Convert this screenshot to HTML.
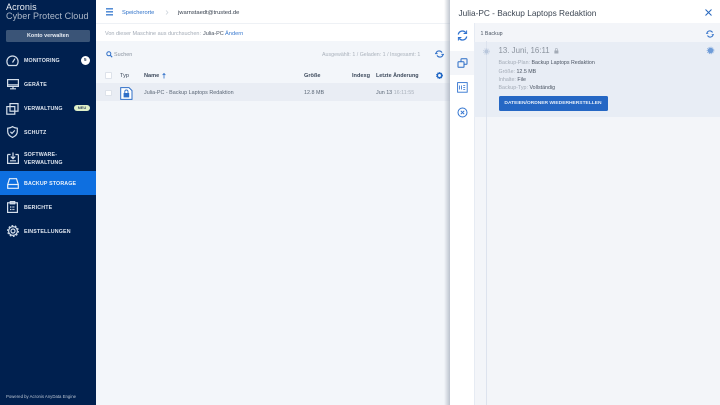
<!DOCTYPE html>
<html lang="de"><head><meta charset="utf-8"><title>Acronis Cyber Protect Cloud</title>
<style>
*{box-sizing:border-box}
html,body{margin:0;padding:0;width:720px;height:405px;overflow:hidden;background:#f3f6fa;font-family:"Liberation Sans",sans-serif}
.a{position:absolute;white-space:nowrap;line-height:1}
.box{position:absolute}
svg{position:absolute;overflow:visible;fill:none}
.nav{position:absolute;left:24px;color:#dfe6f0;font-size:5.3px;font-weight:bold;letter-spacing:.15px;line-height:8px;white-space:nowrap}
.ic{stroke:#d4deea;stroke-width:1.2}
.th{position:absolute;top:73.5px;font-size:5.6px;line-height:1;color:#3d4a5c;font-weight:bold;white-space:nowrap}
.td{position:absolute;font-size:5.4px;line-height:1;color:#5a6675;white-space:nowrap}
.k{color:#a3abb6}.v{color:#4a5462}
</style></head><body>

<!-- main -->
<div class="box" style="left:96px;top:0;width:354px;height:24px;background:#fff;border-bottom:1px solid #eef1f5"></div>
<div class="box" style="left:96px;top:24px;width:354px;height:17px;background:#fff"></div>
<div class="box" style="left:96px;top:41px;width:354px;height:364px;background:#f3f6fa"></div>
<div class="box" style="left:96px;top:83px;width:354px;height:18px;background:#e9edf4"></div>

<svg style="left:106px;top:8px" width="8" height="8"><path d="M0 .8h7M0 3.800h7M0 6.800h7" stroke="#3f7fd0" stroke-width="1.400"/></svg>
<div class="a" style="left:122px;top:10.500px;font-size:5.700px;color:#2c70c9">Speicherorte</div>
<svg style="left:165px;top:10px" width="4" height="6"><path d="M1 .5l2 2-2 2" stroke="#c4ccd6" stroke-width=".6"/></svg>
<div class="a" style="left:178px;top:10.500px;font-size:5.800px;color:#333d4b">jwarnstaedt@trusted.de</div>

<div class="a" style="left:105px;top:31.500px;font-size:5.500px;color:#a3abb6">Von dieser Maschine aus durchsuchen:</div>
<div class="a" style="left:203px;top:31.500px;font-size:5.500px;color:#47515f">Julia-PC</div>
<div class="a" style="left:225px;top:31.500px;font-size:5.700px;color:#3a7ad0">Ändern</div>

<svg style="left:106px;top:50.500px" width="7" height="7"><circle cx="2.800" cy="2.800" r="2" stroke="#2f6fc8" stroke-width="1"/><path d="M4.400 4.400l1.800 1.800" stroke="#2f6fc8" stroke-width="1.100"/></svg>
<div class="a" style="left:114px;top:52.500px;font-size:5.400px;color:#8a93a0">Suchen</div>
<div class="a" style="left:322px;top:52.500px;font-size:5.300px;color:#a9b1bb">Ausgewählt: 1 / Geladen: 1 / Insgesamt: 1</div>
<svg style="left:435px;top:50px" width="9" height="8"><path d="M1 3.200A3.300 3.300 0 0 1 7 2.600M8 4.800A3.300 3.300 0 0 1 2 5.400" stroke="#2f6fc8" stroke-width="1.100"/><path d="M0 3.600h2.600M6.400 4.400H9" stroke="#2f6fc8" stroke-width="1"/></svg>

<div class="box" style="left:105px;top:72px;width:6.500px;height:6.500px;background:#fff;border:1px solid #dde2ea;border-radius:1px"></div>
<div class="th" style="left:120px;font-weight:normal">Typ</div>
<div class="th" style="left:144px">Name</div>
<svg style="left:161.500px;top:72.500px" width="4" height="6"><path d="M2 .5v5M.6 2l1.400-1.500L3.400 2" stroke="#2f6fc8" stroke-width=".8"/></svg>
<div class="th" style="left:304px">Größe</div>
<div class="th" style="left:352px">Indexg</div>
<div class="th" style="left:376px;font-size:5.400px">Letzte Änderung</div>
<svg style="left:436px;top:71.500px" width="7" height="7"><circle cx="3.500" cy="3.500" r="2.200" stroke="#1f66c4" stroke-width="1.500"/><circle cx="3.500" cy="3.500" r="3.100" stroke="#1f66c4" stroke-width=".7" stroke-dasharray="1 1"/></svg>

<div class="box" style="left:105px;top:89.500px;width:6.500px;height:6.500px;background:#fff;border:1px solid #dde2ea;border-radius:1px"></div>
<svg style="left:120px;top:86.500px" width="13" height="13"><path d="M.7.6h8.300l3 3v8.800H.7z" fill="#fff" stroke="#2f6fc8" stroke-width="1"/><rect x="3.600" y="6" width="5.600" height="4.400" fill="#2f6fc8"/><path d="M4.800 6V4.600a1.600 1.600 0 0 1 3.200 0V6" stroke="#2f6fc8" stroke-width=".9"/></svg>
<div class="td" style="left:144px;top:91px">Julia-PC - Backup Laptops Redaktion</div>
<div class="td" style="left:304px;top:91px">12.8 MB</div>
<div class="td" style="left:376px;top:91px">Jun 13 <span style="color:#a9b1bb">16:11:55</span></div>

<!-- sidebar -->
<div class="box" style="left:0;top:0;width:96px;height:405px;background:#00204f"></div>
<div class="box" style="left:0;top:171px;width:96px;height:24px;background:#0e6fe0"></div>
<div class="a" style="left:6px;top:2.500px;font-size:9px;color:#eef2f7;letter-spacing:.1px">Acronis</div>
<div class="a" style="left:6px;top:11.500px;font-size:9px;color:#aeb9c9;letter-spacing:.08px">Cyber Protect Cloud</div>
<div class="box" style="left:6px;top:30px;width:84px;height:12px;background:#3a5477;border-radius:1.500px"></div>
<div class="a" style="left:6px;top:34px;width:84px;text-align:center;font-size:5.400px;font-weight:bold;color:#e8edf4">Konto verwalten</div>

<svg class="ic" style="left:6px;top:54.500px" width="13" height="12"><path d="M2.500 10.500A5.600 5.600 0 1 1 10.500 10.500Z"/><path d="M6.500 7.500L9 3.600"/></svg>
<div class="nav" style="top:57px">MONITORING</div>
<div class="box" style="left:80.500px;top:55.500px;width:9.500px;height:9.500px;background:#fff;border-radius:50%"></div>
<div class="a" style="left:80.500px;top:58px;width:9.500px;text-align:center;font-size:4.500px;font-weight:bold;color:#1b2e4b">5</div>

<svg class="ic" style="left:7px;top:79px" width="12" height="11"><rect x=".6" y=".6" width="10.800" height="6.800"/><path d="M.6 5.800h10.800M6 7.500v2M3 9.800h6"/></svg>
<div class="nav" style="top:81px">GERÄTE</div>

<svg class="ic" style="left:6px;top:102.500px" width="13" height="12"><rect x="4" y=".6" width="8" height="7.600"/><rect x=".8" y="3.600" width="8" height="7.600"/></svg>
<div class="nav" style="top:105px">VERWALTUNG</div>
<div class="box" style="left:74px;top:105px;width:16px;height:6px;background:#dff0c8;border-radius:3px"></div>
<div class="a" style="left:74px;top:106px;width:16px;text-align:center;font-size:4px;font-weight:bold;color:#33475f">NEU</div>

<svg class="ic" style="left:7px;top:126px" width="11" height="12"><path d="M5.500.6c1.500 1 3 1.500 4.800 1.600v3.600c0 2.800-2 4.400-4.800 5.600C2.700 10.200.7 8.600.7 5.800V2.200C2.500 2.100 4 1.600 5.500.6z"/><path d="M3.400 5.800l1.600 1.600 2.800-3"/></svg>
<div class="nav" style="top:129px">SCHUTZ</div>

<svg class="ic" style="left:7px;top:152px" width="12" height="12"><path d="M.6 2.500h3M8.400 2.500h3M.6 2.500v8.900h10.800V2.500"/><path d="M6 .5v6M3.800 4.500L6 6.800l2.200-2.300M3 8.800h6"/></svg>
<div class="nav" style="top:151px">SOFTWARE-<br>VERWALTUNG</div>

<svg class="ic" style="left:7px;top:178px;stroke:#e6effb" width="12" height="11"><path d="M.7 6.500L2.500.7h7l1.800 5.800v3.800H.7z"/><path d="M.7 6.500h10.600"/></svg>
<div class="nav" style="top:180px;color:#eef4fc">BACKUP STORAGE</div>

<svg class="ic" style="left:7px;top:201px" width="11" height="12"><rect x=".6" y="1.800" width="9.800" height="9.600"/><rect x="3.300" y=".6" width="4.400" height="2.200"/><path d="M3 6h5M3 8.500h5" stroke-dasharray="1 .6"/></svg>
<div class="nav" style="top:204px">BERICHTE</div>

<svg class="ic" style="left:7px;top:225px" width="12" height="12"><circle cx="6" cy="6" r="2"/><circle cx="6" cy="6" r="4.400"/><circle cx="6" cy="6" r="5.400" stroke-dasharray="1.700 1.700" stroke-width="1.100"/></svg>
<div class="nav" style="top:228px">EINSTELLUNGEN</div>

<div class="a" style="left:6px;top:394.500px;font-size:4.300px;color:#b9c4d3">Powered by Acronis AnyData Engine</div>

<!-- panel -->
<div class="box" style="left:444px;top:0;width:6px;height:405px;background:linear-gradient(90deg,rgba(150,160,175,0),rgba(150,160,175,.6))"></div>
<div class="box" style="left:450px;top:0;width:270px;height:405px;background:#fff"></div>
<div class="a" style="left:458.500px;top:8.500px;font-size:8.300px;color:#3c4653">Julia-PC - Backup Laptops Redaktion</div>
<svg style="left:705px;top:8.500px" width="7" height="7"><path d="M.5.5l6 6M6.500.5l-6 6" stroke="#2666bd" stroke-width="1"/></svg>

<div class="box" style="left:474px;top:23px;width:246px;height:382px;background:#f3f5f9;border-left:1px solid #e6ebf3"></div>
<div class="box" style="left:474px;top:41.500px;width:246px;height:75.500px;background:#e8edf5"></div>
<div class="box" style="left:450px;top:51px;width:24px;height:24px;background:#f3f5f9"></div>
<div class="box" style="left:486.200px;top:41px;width:.8px;height:364px;background:#dde3ee"></div>

<div class="a" style="left:480.500px;top:31.500px;font-size:5.300px;color:#4a5462">1 Backup</div>
<svg style="left:706px;top:29.500px" width="8" height="8"><path d="M1 3A3 3 0 0 1 6.500 2.500M7 5A3 3 0 0 1 1.500 5.500" stroke="#2f6fc8" stroke-width="1"/><path d="M0 3.300h2.300M5.700 4.700H8" stroke="#2f6fc8" stroke-width=".9"/></svg>

<svg style="left:457px;top:30px" width="11" height="11"><path d="M1.300 4.500A4.200 4.200 0 0 1 8.800 2.700M9.700 6.500A4.200 4.200 0 0 1 2.200 8.300" stroke="#2f72cf" stroke-width="1.300"/><path d="M9.600.5v3H6.600M1.400 10.500v-3h3" stroke="#2f72cf" stroke-width="1"/></svg>
<svg style="left:457px;top:58px" width="11" height="11"><rect x="4" y=".8" width="6" height="5.500" rx=".6" fill="#f3f5f9" stroke="#2a6cc6" stroke-width="1"/><rect x="1" y="3.800" width="6" height="5.500" rx=".6" fill="#f3f5f9" stroke="#2a6cc6" stroke-width="1"/></svg>
<svg style="left:457px;top:82px" width="11" height="11"><rect x=".6" y=".6" width="9.600" height="9.600" stroke="#2f72cf" stroke-width=".9"/><path d="M2.500 3.500v4M4.500 3.500v4M6.200 3.500h2M6.200 5.500h2M6.200 7.500h2" stroke="#2f72cf" stroke-width=".8"/></svg>
<svg style="left:457px;top:107px" width="11" height="11"><circle cx="5.500" cy="5.500" r="4.500" stroke="#2f72cf" stroke-width="1"/><path d="M3.800 3.800l3.400 3.400M7.200 3.800L3.800 7.200" stroke="#2f72cf" stroke-width="1"/></svg>

<svg style="left:483px;top:47.500px" width="7" height="7"><circle cx="3.500" cy="3.500" r="2.200" fill="#b9c7dc"/><circle cx="3.500" cy="3.500" r="3.100" stroke="#b9c7dc" stroke-width=".6" stroke-dasharray="1 1"/></svg>
<div class="a" style="left:498.500px;top:47px;font-size:7.900px;color:#8b939e">13. Juni, 16:11</div>
<svg style="left:554px;top:48px" width="5" height="6"><rect x=".4" y="2.500" width="4" height="3" fill="#a3abb6"/><path d="M1.300 2.500V1.500a1.100 1.100 0 0 1 2.200 0v1" stroke="#a3abb6" stroke-width=".6"/></svg>
<svg style="left:707px;top:47px" width="8" height="8"><circle cx="3.500" cy="3.500" r="2.800" fill="#6f9cd8"/><circle cx="3.500" cy="3.500" r="3.400" stroke="#6f9cd8" stroke-width=".7" stroke-dasharray="1 1"/></svg>

<div class="a" style="left:498.500px;top:61px;font-size:5.300px"><span class="k">Backup-Plan:</span> <span class="v">Backup Laptops Redaktion</span></div>
<div class="a" style="left:498.500px;top:69.500px;font-size:5.300px"><span class="k">Größe:</span> <span class="v">12.5 MB</span></div>
<div class="a" style="left:498.500px;top:77.500px;font-size:5.300px"><span class="k">Inhalte:</span> <span class="v">File</span></div>
<div class="a" style="left:498.500px;top:86px;font-size:5.300px"><span class="k">Backup-Typ:</span> <span class="v">Vollständig</span></div>

<div class="box" style="left:498.500px;top:96px;width:109px;height:15px;background:#2567c4;border-radius:1.500px"></div>
<div class="a" style="left:498.500px;top:101.500px;width:109px;text-align:center;font-size:4.900px;font-weight:bold;color:#e4edf9">DATEIEN/ORDNER WIEDERHERSTELLEN</div>

</body></html>
